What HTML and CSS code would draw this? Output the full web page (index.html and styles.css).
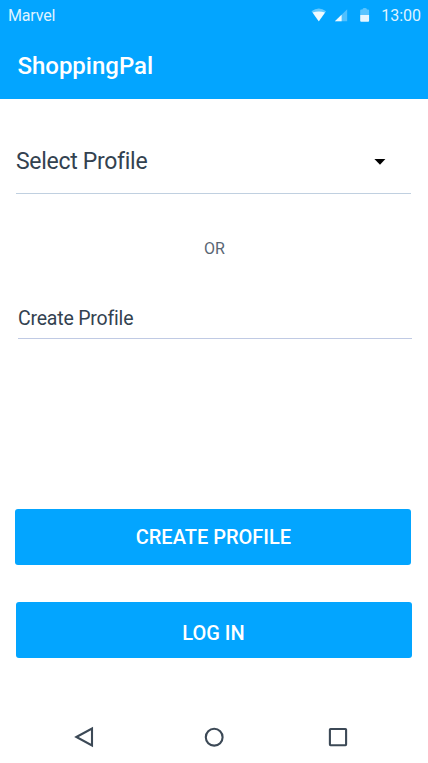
FILE: index.html
```html
<!DOCTYPE html>
<html lang="en">
<head>
<meta charset="utf-8">
<title>ShoppingPal</title>
<link rel="stylesheet" href="styles.css">
</head>
<body>
<div class="screen">
  <header class="header">
    <div class="status">
      <span class="carrier">Marvel</span>
      <svg class="status-icons" width="64" height="18" viewBox="0 0 64 18">
        <path d="M-.5 4.2Q6.8-1 14.1 4.2L6.8 14.4Z" fill="#fff" fill-opacity=".4"/>
        <path d="M.6 5.6Q6.8 3.6 13 5.6L6.8 14.2Z" fill="#fff" fill-opacity=".9"/>
        <path d="M35.2 2.3V14.3H22.9Z" fill="#fff" fill-opacity=".3"/>
        <path d="M29.6 7.8V14.3H22.9Z" fill="#fff" fill-opacity=".9"/>
        <path d="M48.2 8V3.4Q48.2 2.4 49.2 2.4H50.4Q50.6 1 52.7 1T55 2.4H56.1Q57.1 2.4 57.1 3.4V8Z" fill="#fff" fill-opacity=".35"/>
        <path d="M48.2 8H57.1V13.8Q57.1 14.8 56.1 14.8H49.2Q48.2 14.8 48.2 13.8Z" fill="#fff" fill-opacity=".9"/>
      </svg>
      <span class="clock">13:00</span>
    </div>
    <h1 class="title">ShoppingPal</h1>
  </header>
  <main class="content">
    <div class="select">
      <span>Select Profile</span>
      <svg class="caret" width="12" height="6" viewBox="0 0 12 6"><path d="M.4 0H11.4L6 5.7Z"/></svg>
    </div>
    <p class="or">OR</p>
    <div class="field">Create Profile</div>
    <button class="button create">CREATE PROFILE</button>
    <button class="button login">LOG IN</button>
  </main>
  <nav class="nav">
    <svg width="20" height="22" viewBox="0 0 20 22"><path d="M2.4 11L18 2.6V19.4Z"/></svg>
    <svg class="home" width="20" height="22" viewBox="0 0 20 22"><circle cx="10.2" cy="11.2" r="8.4"/></svg>
    <svg width="20" height="22" viewBox="0 0 20 22"><rect x="1.9" y="3" width="16.2" height="16.2" rx=".6"/></svg>
  </nav>
</div>
</body>
</html>
```
FILE: styles.css
```css
* { box-sizing: border-box; }
body { margin: 0; font-family: Roboto, sans-serif; color: #334250; background: #fff; }
.screen { width: 428px; height: 763px; display: flex; flex-direction: column; overflow: hidden; }
.header { height: 98.6px; flex: none; background: #03a5ff; color: #fff; }
.status { height: 30px; display: flex; align-items: center; padding: 0 7px 0 8px; font-size: 16px; color: #dff3ff; }
.carrier { margin-right: auto; letter-spacing: -.15px; }
.status-icons { margin: 1px 5px 0 0; overflow: visible; }
.title { margin: 22px 0 0 17.4px; font-size: 24px; line-height: 28px; font-weight: 500; }
.content { flex: 1; padding: 0 16px; display: flex; flex-direction: column; }
.select { height: 95px; width: 395px; padding: 32px 25px 0 0; display: flex; align-items: center; justify-content: space-between; font-size: 23px; line-height: 26px; letter-spacing: -.3px; border-bottom: 1px solid #c0d0e0; }
.caret { fill: #000; margin-top: 1px; }
.or { margin: 45px 0 0; padding-left: 1px; text-align: center; font-size: 16px; line-height: 20px; color: #596673; }
.field { width: 394px; height: 35px; margin: 45px 0 0 2px; padding-top: 3px; font-size: 19.5px; line-height: 24px; letter-spacing: -.2px; border-bottom: 1px solid #c0cae4; }
.button { width: 396px; height: 56px; margin-left: -.5px; padding: 0; border: 0; border-radius: 3px; background: #03a5ff; color: #fff; font: 500 20px/24px Roboto, sans-serif; flex: none; }
.create { margin-top: 170.2px; margin-left: -.6px; }
.login { margin-top: 36.8px; padding-top: 6px; }
.nav { height: 52px; flex: none; display: flex; justify-content: space-between; padding: 0 80px 0 74px; fill: none; stroke: #3c4956; stroke-width: 2.1; align-items: center; }
.home { margin-left: 6px; }
```
